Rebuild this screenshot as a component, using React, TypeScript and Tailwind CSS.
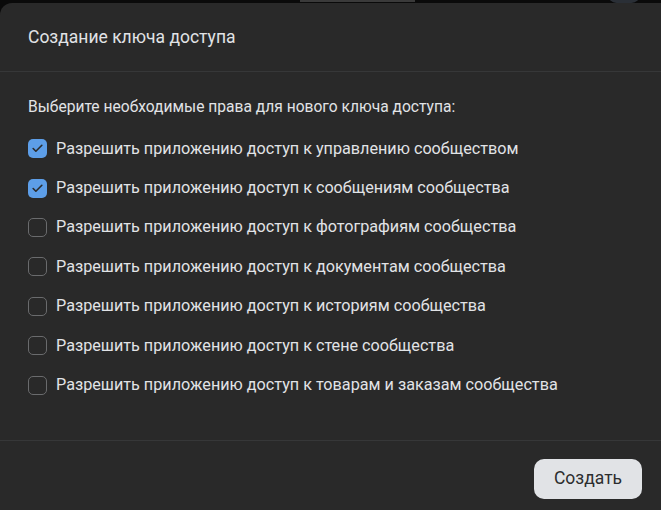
import { Check } from "lucide-react";

const PERMISSIONS = [
  { label: "Разрешить приложению доступ к управлению сообществом", checked: true },
  { label: "Разрешить приложению доступ к сообщениям сообщества", checked: true },
  { label: "Разрешить приложению доступ к фотографиям сообщества", checked: false },
  { label: "Разрешить приложению доступ к документам сообщества", checked: false },
  { label: "Разрешить приложению доступ к историям сообщества", checked: false },
  { label: "Разрешить приложению доступ к стене сообщества", checked: false },
  { label: "Разрешить приложению доступ к товарам и заказам сообщества", checked: false },
];

export default function App() {
  return (
    <div
      className="flex h-[510px] w-[661px] flex-col overflow-hidden bg-[#0a0a0a]"
      style={{ fontFamily: "Roboto, 'Liberation Sans', sans-serif" }}
    >
      <div className="relative h-[3px] shrink-0">
        <div className="absolute left-[300px] top-0 h-[2px] w-[115px] bg-[#3a3a3a]" />
        <div className="absolute left-[608px] top-[-14px] h-[17px] w-[32px] rounded-full bg-[#2a2f36]" />
      </div>
      <div className="flex flex-1 flex-col rounded-tl-[12px] bg-[#292929]">
        <div className="flex h-[69px] items-center border-b border-[#363738] px-[28px]">
          <h2 className="text-[17.5px] text-[#e1e3e6]">Создание ключа доступа</h2>
        </div>
        <div className="flex flex-1 flex-col px-[28px] pt-[25px]">
          <p className="text-[15.6px] leading-[20px] text-[#e1e3e6]">
            Выберите необходимые права для нового ключа доступа:
          </p>
          <ul className="mt-[12px] flex flex-col">
            {PERMISSIONS.map((p) => (
              <li key={p.label} className="flex h-[39.4px] items-center gap-[9px]">
                {p.checked ? (
                  <span className="flex h-[19px] w-[19px] shrink-0 items-center justify-center rounded-[5px] bg-[#5d9ee8]">
                    <Check size={13} strokeWidth={3} className="text-[#2b2b2b]" />
                  </span>
                ) : (
                  <span className="h-[19px] w-[19px] shrink-0 rounded-[5px] border-[1.5px] border-[#6a6b6d]" />
                )}
                <span className="text-[16.2px] text-[#e1e3e6]">{p.label}</span>
              </li>
            ))}
          </ul>
        </div>
        <div className="flex h-[70px] items-center justify-end border-t border-[#363738] px-[19px] pt-[6px]">
          <button className="h-[40px] w-[108px] rounded-[10px] bg-[#e1e3e6] text-[17.5px] text-[#2c2d2e]">
            Создать
          </button>
        </div>
      </div>
    </div>
  );
}
